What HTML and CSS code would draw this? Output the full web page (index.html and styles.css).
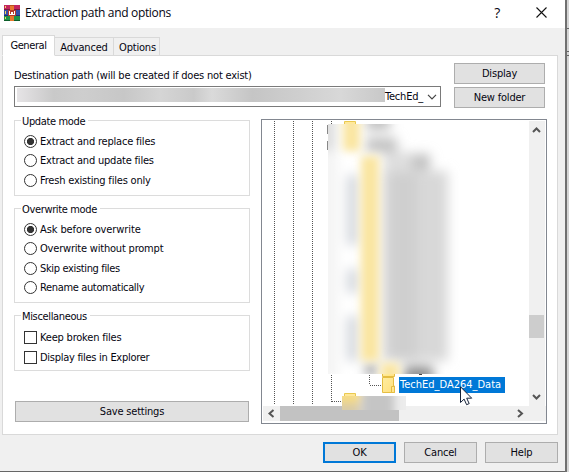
FILE: index.html
```html
<!DOCTYPE html>
<html lang="en">
<head>
<meta charset="utf-8">
<title>Extraction path and options</title>
<link rel="stylesheet" href="styles.css">
</head>
<body>
<div class="screen">
<main class="dialog">
  <header class="titlebar">
    <svg class="app-icon" width="16" height="16" viewBox="0 0 16 16" shape-rendering="crispEdges">
      <rect y="0" width="16" height="5" fill="#c2255e"/><rect y="4" width="16" height="1" fill="#7d1740"/>
      <rect y="5" width="16" height="6" fill="#3450a8"/><rect y="10" width="16" height="1" fill="#1d2f78"/>
      <rect y="11" width="16" height="5" fill="#1f9447"/><rect y="15" width="16" height="1" fill="#0c5f2a"/>
      <path d="M1 1h1v2h-1zM1 6h1v3h-1zM1 12h1v2h-1z" fill="#f3d95c"/>
      <rect x="6" width="4" height="16" fill="#e8782d"/><path d="M6 0h4v1h-4z" fill="#b6501c"/>
      <rect x="4" y="5" width="8" height="6" fill="#b5392b"/>
      <path d="M5 6h1v3h1v-2h2v2h1v-3h1v4h-6z" fill="#fff"/>
    </svg>
    <h1>Extraction path and options</h1>
    <span class="help-mark">?</span>
    <svg class="close" width="11" height="11" viewBox="0 0 11 11"><path d="M.5.5l10 10M10.500.5l-10 10" stroke="#111" stroke-width="1.1"/></svg>
  </header>
  <nav class="tabs">
    <span class="tab active">General</span><span class="tab">Advanced</span><span class="tab options">Options</span>
  </nav>
  <section class="panel">
    <div class="destination">
      <div class="path">
        <label class="path-label">Destination path (will be created if does not exist)</label>
        <div class="combo">
          <span class="hidden-path"></span><span class="path-end">TechEd_</span>
          <svg width="10" height="6" viewBox="0 0 10 6"><path d="M1 .8l4 4 4-4" fill="none" stroke="#444" stroke-width="1.2"/></svg>
        </div>
      </div>
      <div class="side-buttons"><button>Display</button><button class="new">New folder</button></div>
    </div>
    <div class="columns">
      <div class="settings">
        <section class="group update"><h2 class="snug">Update mode</h2>
          <div class="row"><i class="radio on"></i><span>Extract and replace files</span></div>
          <div class="row"><i class="radio"></i><span>Extract and update files</span></div>
          <div class="row low"><i class="radio"></i><span>Fresh existing files only</span></div>
        </section>
        <section class="group overwrite"><h2 class="snug">Overwrite mode</h2>
          <div class="row"><i class="radio on"></i><span class="loose">Ask before overwrite</span></div>
          <div class="row"><i class="radio"></i><span>Overwrite without prompt</span></div>
          <div class="row low"><i class="radio"></i><span class="snug">Skip existing files</span></div>
          <div class="row"><i class="radio"></i><span class="snug">Rename automatically</span></div>
        </section>
        <section class="group misc"><h2 class="snug">Miscellaneous</h2>
          <div class="row"><i class="check"></i><span>Keep broken files</span></div>
          <div class="row low"><i class="check"></i><span class="explorer">Display files in Explorer</span></div>
        </section>
        <button class="save">Save settings</button>
      </div>
      <div class="tree">
        <svg width="286" height="305" viewBox="261 119 286 305">
          <defs>
            <filter id="soft" x="-50%" y="-50%" width="200%" height="200%"><feGaussianBlur stdDeviation="6"/></filter>
            <filter id="mid" x="-100%" y="-20%" width="300%" height="140%"><feGaussianBlur stdDeviation="4"/></filter>
            <clipPath id="area"><rect x="328" y="124" width="132" height="250"/></clipPath>
            <clipPath id="lower"><rect x="342" y="396" width="64" height="14"/></clipPath>
            <linearGradient id="folder" x2="1" y2="1"><stop stop-color="#ffeda0"/><stop offset="1" stop-color="#ffdf7c"/></linearGradient>
          </defs>
          <rect x="261.500" y="119.500" width="285" height="304" fill="#fff" stroke="#828790"/>
          <g fill="none" stroke="#555" stroke-dasharray="1 1" shape-rendering="crispEdges">
            <path d="M274.500 121v283M293.500 121v283M312.500 121v283M331.500 121v281M369.500 375v10M370 385.500h11M332 401.500h11"/>
          </g>
          <path d="M327.500 125v9M327.500 141v9" stroke="#888"/>
          <path d="M344.500 124v-2.500h11v2.500" fill="#ffe89a" stroke="#eac94f"/>
          <g clip-path="url(#area)">
            <rect x="328" y="124" width="132" height="250" fill="#fff"/>
            <g filter="url(#soft)">
              <rect x="318" y="110" width="18" height="42" fill="#ddd"/>
              <rect x="318" y="155" width="20" height="225" fill="#f4f4f4"/>
              <path d="M366 110h24v20h-24zM366 138h31v14h-31zM408 154h22v16h-22z" fill="#c0c0c0"/>
              <path d="M384 152h28v20h-28z" fill="#dedede"/>
              <rect x="382" y="171" width="66" height="190" fill="#d8d8d8"/>
              <path d="M390 173h27v188h-27z" fill="#cfcfcf"/>
              <path d="M347 175h11v70h-11zM347 269h11v24h-11zM347 316h11v45h-11z" fill="#d2d6dc"/>
              <path d="M366 364h10v12h-10zM404 366h29v20h-29z" fill="#8f8f8f"/>
            </g>
            <g filter="url(#mid)" fill="#fae5a0"><rect x="343" y="110" width="17" height="41"/><rect x="361" y="156" width="18" height="205"/><rect x="381" y="363" width="18" height="24"/></g>
          </g>
          <g fill="url(#folder)" stroke="#e5bd42">
            <path d="M382.500 374v2.500h12v-2.500"/>
            <path d="M382.500 377.500h11v8.500h1v6.500h-12z"/><path d="M391.500 392v-5.500h3v6h-3z"/>
          </g>
          <path d="M419 374.500h3" stroke="#444"/>
          <rect x="263" y="406" width="283" height="15" fill="#f0f0f0"/>
          <rect x="529" y="121" width="16" height="300" fill="#f0f0f0"/>
          <rect x="529" y="315" width="15" height="23" fill="#cdcdcd"/>
          <rect x="280" y="406" width="119" height="15" fill="#c2c2c2"/>
          <path d="M344.500 396v-2.500h11v2.500" fill="#ffe89a" stroke="#eac94f"/>
          <g clip-path="url(#lower)"><rect x="342" y="396" width="64" height="14" fill="#ececec"/>
            <g filter="url(#mid)"><rect x="334" y="388" width="26" height="15" fill="#f7dc82"/><rect x="334" y="403" width="26" height="16" fill="#d8cba8"/><rect x="362" y="388" width="32" height="32" fill="#c5c5c5"/></g>
          </g>
          <g fill="none" stroke="#555" stroke-width="2"><path d="M533 132l3.500-3.500 3.500 3.500M533 395l3.500 3.500 3.500-3.500M273.500 410l-4 3.500 4 3.500M518 410l4 3.500-4 3.500"/></g>
        </svg>
        <span class="selected">TechEd_DA264_Data</span>
        <svg class="cursor" width="13" height="20" viewBox="0 0 13 20"><path d="M.5.800v15.700l3.600-3.400 2.500 5.600 2.600-1.100-2.500-5.400h5z" fill="#fff" stroke="#17233a"/></svg>
      </div>
    </div>
  </section>
  <footer><button class="ok">OK</button><button class="cancel">Cancel</button><button>Help</button></footer>
</main>
<svg class="outside" width="4" height="472" viewBox="0 0 4 472" shape-rendering="crispEdges"><rect width="4" height="472" fill="#d5d5d5"/><path d="M0 28h4v1h-4zM0 51h4v1h-4zM0 55h4v1h-4z" fill="#666"/><rect width="2" height="472" fill="#707070"/></svg>
</div>
</body>
</html>
```
FILE: styles.css
```css
* { box-sizing: border-box; }
body { margin: 0; overflow: hidden; color: #050510; font: 11px/14px "DejaVu Sans Condensed", "DejaVu Sans", sans-serif; letter-spacing: -0.2px; }
h1, h2 { margin: 0; font-weight: normal; }
svg { display: block; flex: none; }
span, label, h1, h2 { white-space: nowrap; }
.screen { display: flex; width: 569px; height: 472px; }
.dialog { width: 565px; height: 472px; background: #f0f0f0; border-bottom: 1px solid #666; }
.titlebar { display: flex; align-items: center; height: 28px; padding: 0 18px 3px 4px; background: #fff; }
.titlebar h1 { margin-left: 5px; flex: 1; font: 12px/16px "Open Sans", sans-serif; letter-spacing: -0.34px; }
.help-mark { font: 14px/16px "Open Sans", sans-serif; margin-right: 36px; }
.tabs { display: flex; align-items: flex-end; height: 28px; padding-left: 2px; position: relative; }
.tab { height: 19px; width: 59px; padding-top: 3px; text-align: center; border: 1px solid #d9d9d9; border-left: 0; }
.tab.active { width: 53px; height: 21px; background: #fff; border: 1px solid #d9d9d9; border-bottom-color: #fff; letter-spacing: -0.4px; }
.tab.options { width: 46px; padding-left: 2px; }
.panel { width: 556px; height: 380px; margin: -1px 0 0 2px; padding: 7px 12px 0 11px; background: #fff; border: 1px solid #d9d9d9; }
.destination { display: flex; justify-content: space-between; height: 56px; }
.path { width: 427px; padding-top: 6px; }
.path-label { display: block; height: 17px; }
.combo { display: flex; align-items: center; height: 21px; padding: 0 3px 0 2px; border: 1px solid #7a7a7a; }
.hidden-path { flex: none; width: 368px; height: 14px; margin-top: -3px; background: linear-gradient(90deg, #e6e4e6, #c9c9c9 10%, #cecece 18%, #c7c7c7 29%, #d5d5d5 39%, #cacaca 48%, #dadada 53%, #c5c5c5 64%, #d0d0d0 78%, #d8d8d8 88%, #c8c8c8); }
.path-end { flex: none; width: 42px; }
button { display: block; width: 91px; height: 21px; padding: 0; font: inherit; letter-spacing: inherit; color: inherit; background: #e1e1e1; border: 1px solid #adadad; border-radius: 0; }
.side-buttons { display: flex; flex-direction: column; gap: 3px; }
.columns { display: flex; gap: 11px; }
.settings { flex: none; width: 236px; padding-top: 1px; }
.group { position: relative; margin-bottom: 12px; padding: 11px 9px 0; border: 1px solid #dcdcdc; }
.group h2 { position: absolute; top: -7px; left: 6px; height: 14px; padding: 0 3px 0 1px; background: #fff; font-size: 11px; line-height: 16px; }
.update { height: 76px; }
.overwrite { height: 95px; }
.misc { height: 56px; margin-bottom: 30px; padding-top: 12px; }
.row { display: flex; align-items: center; gap: 3px; height: 19px; }
.row.low { margin-top: 1px; }
.snug { letter-spacing: -0.35px; }
.explorer { letter-spacing: -0.28px; }
.loose { letter-spacing: -0.1px; }
.radio, .check { flex: none; width: 13px; height: 13px; border: 1px solid #333; background: #fff; }
.radio { border-radius: 50%; }
.radio.on { background: radial-gradient(circle, #333 0 3.300px, #fff 3.900px); }
.save { width: 234px; margin-left: 1px; }
.tree { flex: none; position: relative; width: 286px; height: 305px; }
.selected { position: absolute; left: 138px; top: 258px; width: 106px; height: 16px; padding-left: 1px; line-height: 16px; letter-spacing: 0; color: #fff; background: #0078d7; }
.cursor { position: absolute; left: 199px; top: 267px; }
footer { display: flex; justify-content: flex-end; gap: 8px; padding: 7px 7px 0; }
footer button { width: 73px; }
.ok { border: 2px solid #0078d7; }
```
